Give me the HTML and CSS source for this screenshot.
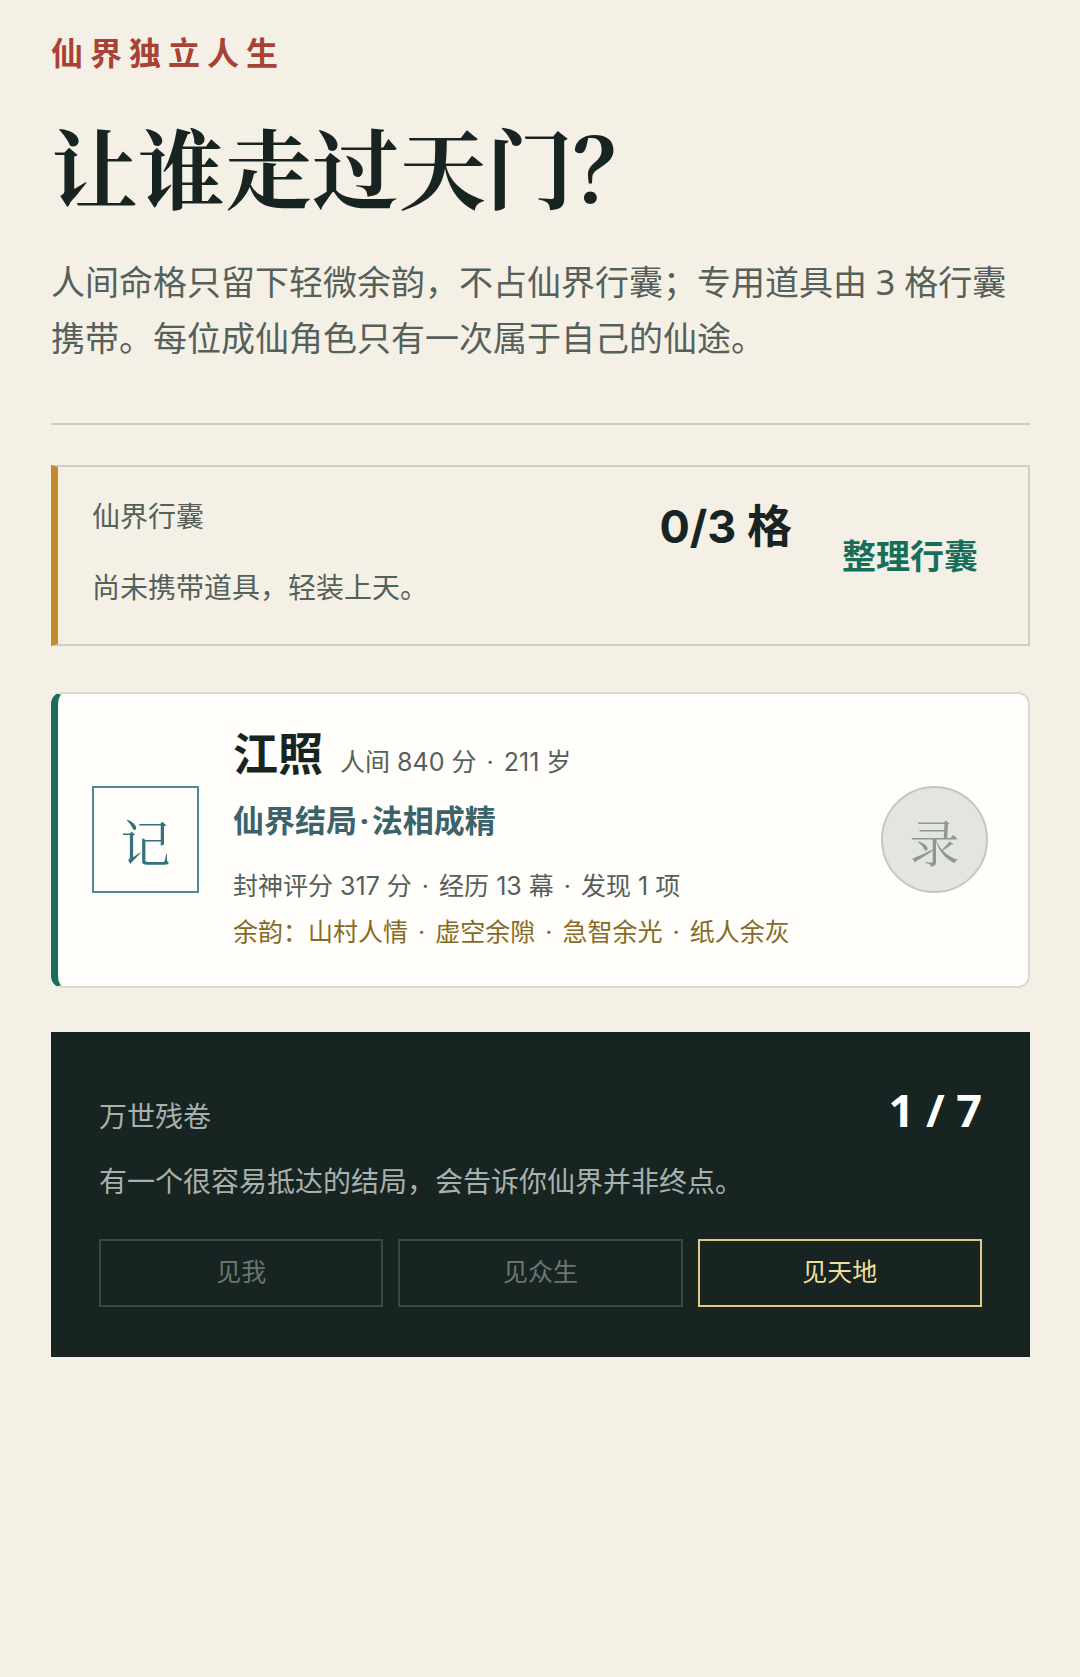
FILE: index.html
```html
<!DOCTYPE html>
<html lang="zh-CN">
<head>
<meta charset="utf-8">
<meta name="viewport" content="width=device-width, initial-scale=1">
<title>仙界独立人生</title>
<link rel="stylesheet" href="styles.css">
</head>
<body>
<main class="page">
  <header class="intro">
    <p class="eyebrow">仙界独立人生</p>
    <h1 class="title">让谁走过天门？</h1>
    <p class="lead">人间命格只留下轻微余韵，不占仙界行囊；专用道具由 3 格行囊携带。每位成仙角色只有一次属于自己的仙途。</p>
  </header>

  <section class="bag">
    <div class="bag-info">
      <div class="bag-row">
        <span class="label">仙界行囊</span>
        <strong class="count">0/3 格</strong>
      </div>
      <p class="note">尚未携带道具，轻装上天。</p>
    </div>
    <button class="bag-action" type="button">整理行囊</button>
  </section>

  <article class="life">
    <span class="seal">记</span>
    <div class="life-info">
      <div class="life-head">
        <h2 class="name">江照</h2>
        <span class="meta">人间 840 分 <span class="dot">·</span> 211 岁</span>
      </div>
      <p class="ending">仙界结局<span class="dot">·</span>法相成精</p>
      <p class="stats">封神评分 317 分 <span class="dot">·</span> 经历 13 幕 <span class="dot">·</span> 发现 1 项</p>
      <p class="stats echoes">余韵：山村人情 <span class="dot">·</span> 虚空余隙 <span class="dot">·</span> 急智余光 <span class="dot">·</span> 纸人余灰</p>
    </div>
    <button class="record" type="button" disabled>录</button>
  </article>

  <section class="scroll">
    <div class="scroll-head">
      <span class="label">万世残卷</span>
      <strong class="count">1 / 7</strong>
    </div>
    <p class="note">有一个很容易抵达的结局，会告诉你仙界并非终点。</p>
    <ul class="stages">
      <li class="stage">见我</li>
      <li class="stage">见众生</li>
      <li class="stage stage-lit">见天地</li>
    </ul>
  </section>
</main>
</body>
</html>
```

FILE: styles.css
```css
:root {
  --paper: #f5f0e5;
  --ink: #172421;
  --muted: #56605b;
  --line: #d2cdc1;
  --sans: "Noto Sans", "Noto Sans CJK SC", sans-serif;
  --figures: Inter, "Noto Sans CJK SC", sans-serif;
  --serif: "Noto Serif CJK SC", "Noto Serif SC", "Source Han Serif SC", "Noto Sans CJK SC", serif;
}

* {
  box-sizing: border-box;
}

body {
  margin: 0;
  background: var(--paper);
  color: var(--ink);
  font-family: var(--sans);
}

h1, h2, p, ul {
  margin: 0;
  padding: 0;
}

button {
  font-family: inherit;
}

.page {
  padding: 29px 50px 30px 51px;
}

/* Intro */
.intro {
  padding-bottom: 57px;
  border-bottom: 2px solid var(--line);
}

.eyebrow {
  color: #a84235;
  font-size: 32px;
  font-weight: 700;
  line-height: 48px;
  letter-spacing: 7px;
}

.title {
  margin-top: 35px;
  font-family: var(--serif);
  font-size: 87px;
  font-weight: 700;
  line-height: 108px;
}

.lead {
  margin-top: 34px;
  color: var(--muted);
  font-size: 34px;
  line-height: 56px;
}

/* Shared text */
.label,
.note {
  font-size: 28px;
  line-height: 42px;
}

.count {
  font-size: 45px;
  font-weight: 700;
  line-height: 63px;
}

/* Bag */
.bag {
  display: flex;
  align-items: center;
  margin-top: 40px;
  border: 2px solid var(--line);
  border-left: 7px solid #c28b2c;
}

.bag-info {
  flex: 1;
  padding: 28px 0 36px 34px;
}

.bag-row {
  display: flex;
  justify-content: space-between;
  align-items: flex-start;
}

.bag .count {
  font-family: var(--figures);
}

.bag .label,
.bag .note {
  color: var(--muted);
}

.bag .note {
  margin-top: 8px;
}

.bag-action {
  padding: 0 50px;
  border: 0;
  background: none;
  color: #176f5a;
  font-size: 34px;
  font-weight: 700;
  line-height: 56px;
}

/* Life card */
.life {
  display: flex;
  align-items: center;
  gap: 34px;
  margin-top: 46px;
  padding: 30px 40px 31px 34px;
  border: 2px solid #dbd8d0;
  border-left: 7px solid #176f5a;
  border-radius: 12px;
  background: #fffefa;
}

.seal,
.record {
  display: flex;
  flex: none;
  align-items: center;
  justify-content: center;
  width: 107px;
  height: 107px;
  padding: 0;
  font-family: var(--serif);
  font-size: 50px;
  line-height: 62px;
}

.seal {
  border: 2px solid #4d8a94;
  color: #34707d;
}

.record {
  border: 2px solid #c4c6c0;
  border-radius: 50%;
  background: #e3e5e0;
  color: #929692;
}

.life-info {
  flex: 1;
}

.life-head {
  display: flex;
  align-items: baseline;
  gap: 17px;
}

.name {
  font-size: 45px;
  font-weight: 700;
  line-height: 60px;
}

.meta,
.stats {
  color: var(--muted);
  font-family: var(--figures);
  font-size: 25px;
}

.dot {
  margin: 0 3px;
}

.ending {
  margin: 15px 0 22px;
  color: #3a636b;
  font-size: 31px;
  font-weight: 700;
  line-height: 42px;
}

.stats {
  line-height: 46px;
}

.echoes {
  color: #876a24;
}

/* Scroll panel */
.scroll {
  margin-top: 44px;
  padding: 46px 48px 50px;
  background: var(--ink);
  color: #a9b1ae;
}

.scroll-head {
  display: flex;
  align-items: baseline;
  justify-content: space-between;
}

.scroll .count {
  color: #ffffff;
}

.scroll .note {
  margin-top: 19px;
}

.stages {
  display: grid;
  grid-template-columns: repeat(3, 1fr);
  gap: 15px;
  margin-top: 37px;
  list-style: none;
}

.stage {
  padding: 10px 0 14px;
  border: 2px solid #3a4844;
  color: #6b7672;
  font-size: 25px;
  line-height: 40px;
  text-align: center;
}

.stage-lit {
  border-color: #dccb88;
  color: #eedd9f;
}
```
